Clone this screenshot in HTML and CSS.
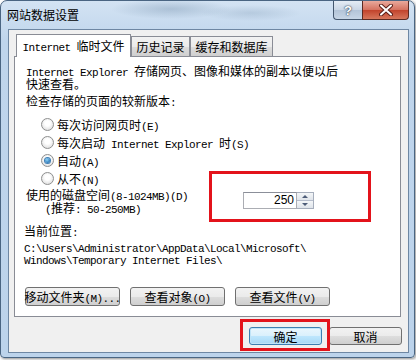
FILE: index.html
```html
<!DOCTYPE html>
<html lang="zh-CN">
<head>
    <meta charset="UTF-8">
    <meta name="viewport" content="width=device-width, initial-scale=1.0">
    <title>网站数据设置</title>
    <link rel="stylesheet" href="styles.css">
</head>
<body>
    <div class="window">
        <div class="titlebar">
            <span class="title">网站数据设置</span>
            <div class="caption">
                <span class="cap help">?</span>
                <span class="cap close">
                    <svg width="14" height="12" viewBox="0 0 14 12">
                        <path d="M2 1.5 L12 10.5 M12 1.5 L2 10.5" stroke="#5a1f18" stroke-width="4" stroke-linecap="round"/>
                        <path d="M2 1.5 L12 10.5 M12 1.5 L2 10.5" stroke="#fff" stroke-width="2" stroke-linecap="round"/>
                    </svg>
                </span>
            </div>
        </div>
        <div class="client">
            <div class="tabs">
                <div class="tab active"><span><span class="en">Internet </span>临时文件</span></div>
                <div class="tab"><span>历史记录</span></div>
                <div class="tab"><span>缓存和数据库</span></div>
            </div>
            <div class="panel">
                <p class="intro"><span class="en">Internet Explorer </span>存储网页、图像和媒体的副本以便以后<br>快速查看。</p>
                <p class="label">检查存储的页面的较新版本<span class="en">:</span></p>
                <ul class="options">
                    <li><span class="radio"></span><span>每次访问网页时<span class="en">(E)</span></span></li>
                    <li><span class="radio"></span><span>每次启动<span class="en"> Internet Explorer </span>时<span class="en">(S)</span></span></li>
                    <li><span class="radio on"></span><span>自动<span class="en">(A)</span></span></li>
                    <li><span class="radio"></span><span>从不<span class="en">(N)</span></span></li>
                </ul>
                <div class="disk">
                    <div class="disk-text">
                        <div>使用的磁盘空间<span class="en">(8-1024MB)(D)</span></div>
                        <div class="hint"><span class="en">(</span>推荐<span class="en">: 50-250MB)</span></div>
                    </div>
                    <div class="spin">
                        <span class="spin-value">250</span>
                        <span class="spin-arrows">
                            <span class="arrow up"></span>
                            <span class="arrow down"></span>
                        </span>
                    </div>
                </div>
                <p class="label loc-label">当前位置<span class="en">:</span></p>
                <p class="path en">C:\Users\Administrator\AppData\Local\Microsoft\<br>Windows\Temporary Internet Files\</p>
                <div class="actions">
                    <button class="btn"><span>移动文件夹<span class="en">(M)...</span></span></button>
                    <button class="btn"><span>查看对象<span class="en">(O)</span></span></button>
                    <button class="btn"><span>查看文件<span class="en">(V)</span></span></button>
                </div>
            </div>
            <div class="dialog-buttons">
                <button class="btn default">确定</button>
                <button class="btn">取消</button>
            </div>
        </div>
    </div>
    <div class="mark mark-size"></div>
    <div class="mark mark-ok"></div>
</body>
</html>
```

FILE: styles.css
```css
* {
    box-sizing: border-box;
}
body {
    margin: 0;
    background: #fff;
    font-family: "Noto Sans CJK SC", "Noto Sans", sans-serif;
    font-size: 12px;
    line-height: 13px;
    color: #000;
    position: relative;
    width: 416px;
    height: 360px;
    overflow: hidden;
}
p, ul {
    margin: 0;
    padding: 0;
}
.en {
    font-family: "Liberation Mono", "DejaVu Sans Mono", monospace;
    font-size: 11px;
    line-height: 0;
    letter-spacing: -0.6px;
}

/* window frame */
.window {
    width: 415px;
    height: 358px;
    border: 1px solid #4a6582;
    border-radius: 7px 7px 4px 4px;
    padding: 0 5px 4px 7px;
    display: flex;
    flex-direction: column;
    background:
        radial-gradient(ellipse 60px 10px at 170px 8px, rgba(90, 120, 150, 0.3), transparent),
        radial-gradient(ellipse 50px 8px at 250px 12px, rgba(90, 120, 150, 0.2), transparent),
        linear-gradient(#d3e3f3, #bfd5ec 40px, #bcd3eb);
    box-shadow: 1px 1px 3px rgba(0, 0, 0, 0.45);
}
.titlebar {
    height: 28px;
    display: flex;
    align-items: flex-start;
}
.title {
    margin: 6px 0 0 -1px;
    line-height: 16px;
    color: #000;
}
.caption {
    margin-left: auto;
    display: flex;
}
.cap {
    height: 19px;
    display: flex;
    align-items: center;
    justify-content: center;
    border: 1px solid #44576e;
    border-top: none;
}
.help {
    width: 29px;
    border-right: none;
    border-radius: 0 0 0 4px;
    background: linear-gradient(#e4ecf5, #c9d6e5 50%, #b3c4d8 51%, #c7d6e6);
    color: #fff;
    font-family: "Liberation Sans", sans-serif;
    font-weight: bold;
    font-size: 13px;
    text-shadow: 0 0 2px #2a3c52, 0 0 1px #2a3c52;
}
.close {
    width: 47px;
    border-color: #5c2a22;
    border-radius: 0 0 4px 0;
    background: linear-gradient(#e9a99c, #d4715f 50%, #c2432c 51%, #d7775c);
}

/* client area */
.client {
    height: 324px;
    border: 1px solid #6e87a3;
    background: #f0f0f0;
    padding: 4px 6px 0 5px;
}
.tabs {
    display: flex;
    align-items: flex-end;
    height: 22px;
    padding-left: 2px;
}
.tab {
    height: 20px;
    padding: 0 4px;
    display: flex;
    align-items: center;
    justify-content: center;
    border: 1px solid #898c95;
    border-bottom: none;
    background: linear-gradient(#f2f2f2, #ebebeb 50%, #dddddd 51%, #cfcfcf);
    white-space: nowrap;
}
.tab:nth-child(2) {
    width: 59px;
}
.tab:nth-child(3) {
    width: 83px;
}
.tab.active {
    width: 115px;
    height: 23px;
    margin-bottom: -1px;
    background: #fff;
    position: relative;
    z-index: 1;
    padding-bottom: 1px;
}
.panel {
    width: 387px;
    height: 261px;
    border: 1px solid #898c95;
    background: #fff;
    padding-left: 11px;
}
.intro {
    margin-top: 7px;
    height: 26px;
}
.label {
    margin-top: 4px;
    height: 13px;
}
.options {
    list-style: none;
    margin-top: 8px;
    padding-left: 15px;
}
.options li {
    height: 18px;
    display: flex;
    align-items: center;
    gap: 3px;
    white-space: nowrap;
}
.radio {
    width: 13px;
    height: 13px;
    border: 1px solid #8e8f8f;
    border-radius: 50%;
    background: radial-gradient(circle at 50% 40%, #ffffff 30%, #e6e6e6 70%, #d0d0d0);
    display: flex;
    align-items: center;
    justify-content: center;
}
.radio.on::after {
    content: "";
    width: 5px;
    height: 5px;
    border-radius: 50%;
    background: radial-gradient(circle at 40% 35%, #8fd4f8, #2a78b8 70%, #1c5488);
    box-shadow: 0 0 0 1px #3f7fb5;
}
.disk {
    display: flex;
    margin-top: 1px;
}
.disk-text {
    width: 217px;
    height: 26px;
}
.hint {
    padding-left: 19px;
}
.spin {
    display: flex;
    height: 17px;
    margin-top: 4px;
}
.spin-value {
    width: 54px;
    border: 1px solid #abadb3;
    border-top-color: #8b8f99;
    background: #fff;
    text-align: right;
    padding-right: 2px;
    font-family: "Liberation Sans", sans-serif;
    font-size: 12px;
    line-height: 15px;
}
.spin-arrows {
    width: 17px;
    display: flex;
    flex-direction: column;
    border: 1px solid #a6aebc;
    border-left: none;
}
.arrow {
    flex: 1;
    display: flex;
    align-items: center;
    justify-content: center;
    background: linear-gradient(#f4f6f8, #dfe4ea);
}
.arrow.up {
    border-bottom: 1px solid #b5bccb;
}
.arrow.up::after {
    content: "";
    border: 3px solid transparent;
    border-bottom: 3px solid #4d5c78;
    border-top: none;
}
.arrow.down::after {
    content: "";
    border: 3px solid transparent;
    border-top: 3px solid #4d5c78;
    border-bottom: none;
}
.loc-label {
    margin-top: 10px;
    margin-left: -2px;
}
.path {
    margin-top: 6px;
    margin-left: -2px;
    height: 24px;
    line-height: 12px;
}
.actions {
    display: flex;
    gap: 10px;
    margin-top: 20px;
    margin-left: -1px;
}
.btn {
    width: 95px;
    height: 19px;
    padding: 0;
    border: 1px solid #707070;
    border-radius: 3px;
    background: linear-gradient(#f2f2f2, #ebebeb 50%, #dddddd 51%, #cfcfcf);
    font-family: "Noto Sans CJK SC", sans-serif;
    font-size: 12px;
    line-height: 13px;
    color: #000;
    white-space: nowrap;
    display: flex;
    align-items: center;
    justify-content: center;
}
.dialog-buttons {
    display: flex;
    justify-content: flex-end;
    gap: 7px;
    margin-top: 10px;
}
.dialog-buttons .btn {
    width: 73px;
    height: 18px;
}
.btn.default {
    border-color: #3c7fb1;
    background: linear-gradient(#eaf6fd, #d9f0fc 50%, #bee6fd 51%, #a7d9f5);
    box-shadow: inset 0 0 0 1px #c0e4f8;
}

/* red annotation boxes */
.mark {
    position: absolute;
    border: 3px solid #e3131b;
}
.mark-size {
    left: 209px;
    top: 171px;
    width: 162px;
    height: 51px;
}
.mark-ok {
    left: 240px;
    top: 319px;
    width: 90px;
    height: 32px;
}
```
